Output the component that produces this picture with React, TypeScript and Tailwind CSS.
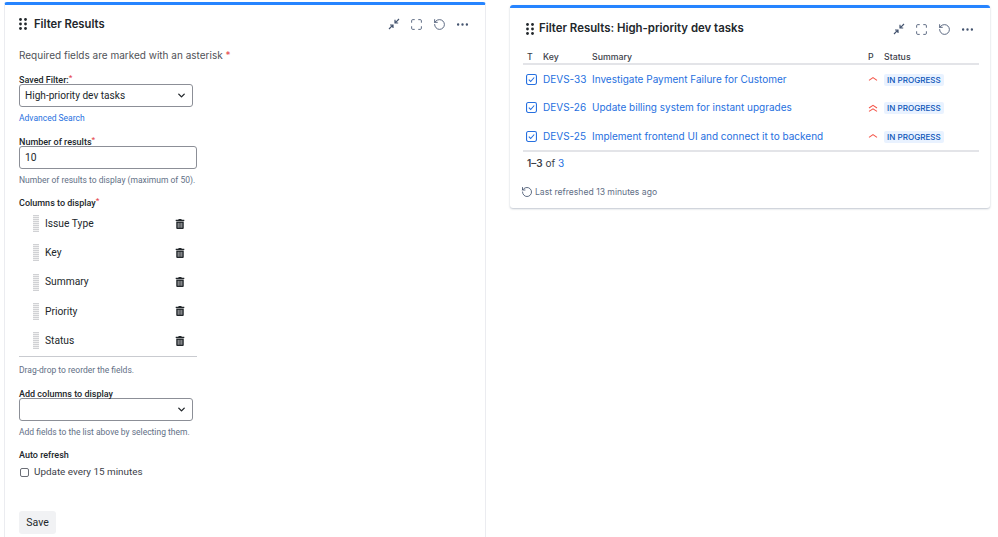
import { ChevronDown, Maximize, MoreHorizontal, RotateCcw } from "lucide-react";
import { FaTrashAlt } from "react-icons/fa";

const columns = ["Issue Type", "Key", "Summary", "Priority", "Status"];

const issues = [
  { key: "DEVS-33", summary: "Investigate Payment Failure for Customer", highest: false },
  { key: "DEVS-26", summary: "Update billing system for instant upgrades", highest: true },
  { key: "DEVS-25", summary: "Implement frontend UI and connect it to backend", highest: false },
];

function DragDots() {
  return (
    <svg width="8" height="12" viewBox="0 0 8 12" className="shrink-0 fill-[#22272b]">
      {[1.5, 6, 10.5].map((y) => (
        <g key={y}>
          <circle cx="1.5" cy={y} r="1.4" />
          <circle cx="6.5" cy={y} r="1.4" />
        </g>
      ))}
    </svg>
  );
}

function ShrinkIcon() {
  return (
    <svg width="12" height="12" viewBox="0 0 12 12" fill="none" stroke="#44546f" strokeWidth="1.2">
      <path d="M11 1 7.2 4.8M7 1.8V5h3.2" />
      <path d="M1 11 4.8 7.2M2 7h3v3" />
    </svg>
  );
}

function TaskIcon() {
  return (
    <svg width="11" height="11" viewBox="0 0 11 11" fill="none" stroke="#2670e0" strokeWidth="1.1" className="block">
      <rect x="0.55" y="0.55" width="9.9" height="9.9" rx="1.6" />
      <path d="M2.8 5.6 4.7 7.5 8.2 3.5" />
    </svg>
  );
}

function PriorityIcon({ highest }: { highest: boolean }) {
  return (
    <svg width="10" height="10" viewBox="0 0 10 10" fill="none" stroke="#f4574b" strokeWidth="1.1" className="block">
      {highest ? <path d="M1 5 5 2.4 9 5M1 8.4 5 5.8 9 8.4" /> : <path d="M1 6.4 5 3.6 9 6.4" />}
    </svg>
  );
}

function Toolbar() {
  return (
    <div className="ml-auto flex items-center text-[#44546f]">
      <ShrinkIcon />
      <Maximize size={13} strokeWidth={1.6} className="ml-[10px]" />
      <RotateCcw size={13} strokeWidth={1.6} className="ml-[10px]" />
      <MoreHorizontal size={15} strokeWidth={1.8} className="ml-[9px]" />
    </div>
  );
}

function Label({ text, required }: { text: string; required?: boolean }) {
  return (
    <div className="h-[10px] font-['Roboto',sans-serif] text-[9px] leading-[10px] font-medium whitespace-nowrap text-[#22272b]">
      {text}
      {required && <span className="relative -top-[3px] text-[8px] leading-none text-[#e5484d]">*</span>}
    </div>
  );
}

function Select({ value }: { value?: string }) {
  return (
    <div className="-mt-[1px] flex h-[23px] w-[174px] items-center justify-between rounded-[3px] border border-[#8c8f97] px-[5px] font-['Roboto',sans-serif] text-[10.1px] text-[#22272b]">
      <span>{value}</span>
      <ChevronDown size={11} strokeWidth={3} />
    </div>
  );
}

function Help({ text }: { text: string }) {
  return <p className="mt-[6px] h-[11px] font-['Roboto',sans-serif] text-[8.5px] leading-[11px] text-[#626f86]">{text}</p>;
}

export default function App() {
  return (
    <div className="flex h-[537px] w-[998px] items-start overflow-hidden bg-white pl-[4px] font-['Inter',sans-serif]">
      {/* Edit panel */}
      <div className="mt-[2px] h-[560px] w-[482px] shrink-0 rounded-t-[3px] border-x border-[#ebecf0] border-t-[3px] border-t-[#2684ff] pr-[15px] pl-[14px]">
        <div className="mt-[12px] flex h-[14px] items-center">
          <DragDots />
          <h2 className="ml-[7px] text-[11.25px] font-semibold text-[#22272b]">Filter Results</h2>
          <Toolbar />
        </div>

        <p className="mt-[17px] h-[14px] text-[10px] leading-[14px] text-[#505258]">
          Required fields are marked with an asterisk <span className="text-[#e5484d]">*</span>
        </p>

        <div className="mt-[13px]">
          <Label text="Saved Filter:" required />
          <Select value="High-priority dev tasks" />
        </div>
        <a className="mt-[6px] block h-[10px] font-['Roboto',sans-serif] text-[8.5px] leading-[10px] text-[#2670e0]">Advanced Search</a>

        <div className="mt-[14px]">
          <Label text="Number of results" required />
          <div className="-mt-[1px] flex h-[23px] w-[178px] items-center rounded-[3px] border border-[#8c8f97] pl-[5px] font-['Roboto',sans-serif] text-[10.25px] text-[#22272b]">
            10
          </div>
        </div>
        <Help text="Number of results to display (maximum of 50)." />

        <div className="mt-[12px]">
          <Label text="Columns to display" required />
        </div>
        <ul className="mt-[1px] w-[178px] border-b border-[#c9cbd0] pb-[1px]">
          {columns.map((name) => (
            <li key={name} className="flex h-[29.25px] items-center pr-[12px] pl-[14px] font-['Roboto',sans-serif]">
              <span className="h-[17px] w-[6px] bg-[repeating-linear-gradient(0deg,#d0d1d4_0,#d0d1d4_1px,#f1f1f1_1px,#f1f1f1_2px)]" />
              <span className="ml-[6px] text-[10.25px] text-[#22272b]">{name}</span>
              <FaTrashAlt size={10} className="ml-auto text-[#22272b]" />
            </li>
          ))}
        </ul>
        <p className="mt-[8px] h-[11px] font-['Roboto',sans-serif] text-[8.5px] leading-[11px] text-[#626f86]">Drag-drop to reorder the fields.</p>

        <div className="mt-[13px]">
          <Label text="Add columns to display" />
          <Select />
        </div>
        <Help text="Add fields to the list above by selecting them." />

        <div className="mt-[12px]">
          <Label text="Auto refresh" />
          <label className="mt-[5px] flex h-[14px] items-center font-['Roboto',sans-serif] text-[9.9px] leading-[14px] text-[#3b4048]">
            <span className="ml-[1px] h-[8.5px] w-[8.5px] rounded-[2px] border border-[#6b6e76]" />
            <span className="ml-[5.5px]">Update every 15 minutes</span>
          </label>
        </div>

        <button className="mt-[32px] block h-[23px] w-[37px] rounded-[3px] bg-[#f1f2f4] font-['Roboto',sans-serif] text-[10.5px] text-[#22272b]">
          Save
        </button>
      </div>

      {/* Results panel */}
      <div className="mt-[5px] ml-[24px] h-[203px] w-[480px] shrink-0 rounded-[3px] border-t-[3px] border-t-[#2684ff] bg-white pr-[11px] pl-[13px] shadow-[0_1px_2px_rgba(9,30,66,0.25)]">
        <div className="mt-[14px] flex h-[14px] items-center pr-[4px] pl-[3px]">
          <DragDots />
          <h2 className="ml-[5px] text-[11.4px] font-semibold text-[#22272b]">Filter Results: High-priority dev tasks</h2>
          <Toolbar />
        </div>

        <table className="mt-[14px] w-[456px] table-fixed border-b-2 border-[#e3e4e8] text-left">
          <thead>
            <tr className="h-[14px] border-b-2 border-[#e3e4e8] text-[8.75px] font-medium text-[#3b4048]">
              <th className="relative top-[1px] w-[20px] pl-[4px] font-medium">T</th>
              <th className="relative top-[1px] w-[49px] pl-0 font-medium">Key</th>
              <th className="relative top-[1px] w-[276px] font-medium">Summary</th>
              <th className="relative top-[1px] w-[16px] font-medium">P</th>
              <th className="relative top-[1px] font-medium">Status</th>
            </tr>
          </thead>
          <tbody>
            {issues.map((issue) => (
              <tr key={issue.key} className="h-[29px] text-[10px] text-[#2670e0]">
                <td className="pl-[3px]">
                  <TaskIcon />
                </td>
                <td>{issue.key}</td>
                <td>{issue.summary}</td>
                <td>
                  <PriorityIcon highest={issue.highest} />
                </td>
                <td>
                  <span className="inline-block rounded-[2px] bg-[#e9f2ff] px-[3px] text-[8.1px] leading-[12px] font-medium text-[#0c55b8]">
                    IN PROGRESS
                  </span>
                </td>
              </tr>
            ))}
          </tbody>
        </table>

        <p className="mt-[4px] pl-[4px] text-[10px] leading-[14px] text-[#3b4048]">
          <span className="font-semibold">1–3</span> of <span className="text-[#2670e0]">3</span>
        </p>
        <div className="mt-[16px] flex items-center text-[8.6px] leading-[12px] text-[#626f86]">
          <RotateCcw size={12} strokeWidth={1.7} className="-ml-[2px] text-[#44546f]" />
          <span className="ml-[2px]">Last refreshed 13 minutes ago</span>
        </div>
      </div>
    </div>
  );
}
